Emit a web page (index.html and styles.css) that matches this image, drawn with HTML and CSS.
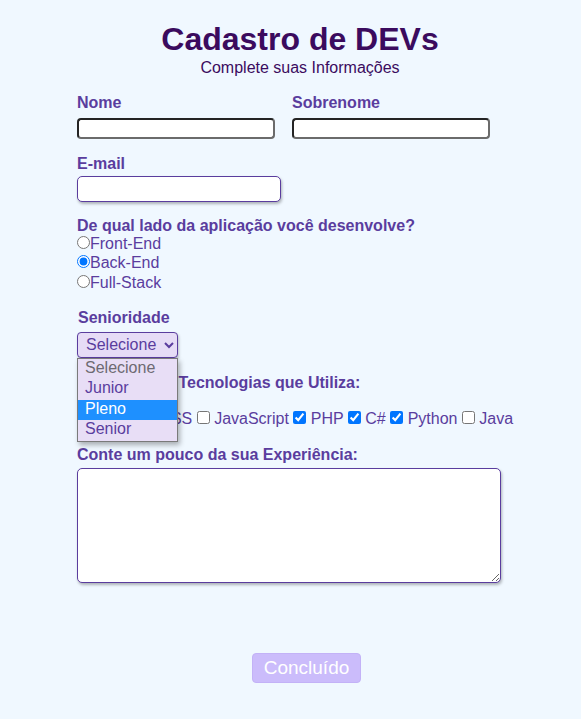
FILE: index.html
```html
<!DOCTYPE html>
<html lang="pt-BR">
<head>
<meta charset="utf-8">
<title>Cadastro de DEVs</title>
<link rel="stylesheet" href="styles.css">
</head>
<body>
<header class="header">
  <h1 class="title">Cadastro de DEVs</h1>
  <p class="subtitle">Complete suas Informações</p>
</header>
<form class="form">
  <div class="row-names">
    <div class="field">
      <label class="label" for="nome">Nome</label>
      <input class="input-name" id="nome" type="text">
    </div>
    <div class="field">
      <label class="label" for="sobrenome">Sobrenome</label>
      <input class="input-name" id="sobrenome" type="text">
    </div>
  </div>

  <div class="group group-email">
    <label class="label" for="email">E-mail</label>
    <input class="input-email" id="email" type="email">
  </div>

  <div class="group group-radio">
    <p class="label">De qual lado da aplicação você desenvolve?</p>
    <div class="radio-line"><input class="radio" type="radio" name="lado" id="fe"><label class="opt" for="fe">Front-End</label></div>
    <div class="radio-line"><input class="radio" type="radio" name="lado" id="be" checked><label class="opt" for="be">Back-End</label></div>
    <div class="radio-line radio-last"><input class="radio" type="radio" name="lado" id="fs"><label class="opt" for="fs">Full-Stack</label></div>
  </div>

  <div class="group group-senior">
    <label class="label label-senior" for="senior">Senioridade</label>
    <div class="select-wrap">
      <select class="select" id="senior">
        <option>Selecione</option>
        <option>Junior</option>
        <option>Pleno</option>
        <option>Senior</option>
      </select>
      <ul class="popup">
        <li class="popup-item popup-disabled">Selecione</li>
        <li class="popup-item">Junior</li>
        <li class="popup-item popup-active">Pleno</li>
        <li class="popup-item">Senior</li>
      </ul>
    </div>
  </div>

  <div class="group group-tech">
    <p class="label">Selecione as Tecnologias que Utiliza:</p>
    <div class="checks"><input class="check" type="checkbox" id="html"> <label class="opt" for="html">HTML</label> <input class="check" type="checkbox" id="css"> <label class="opt" for="css">CSS</label> <input class="check" type="checkbox" id="js"> <label class="opt" for="js">JavaScript</label> <input class="check" type="checkbox" id="php" checked> <label class="opt" for="php">PHP</label> <input class="check" type="checkbox" id="cs" checked> <label class="opt" for="cs">C#</label> <input class="check" type="checkbox" id="py" checked> <label class="opt" for="py">Python</label> <input class="check" type="checkbox" id="java"> <label class="opt" for="java">Java</label></div>
  </div>

  <div class="group group-exp">
    <label class="label" for="exp">Conte um pouco da sua Experiência:</label>
    <textarea class="textarea" id="exp"></textarea>
  </div>

  <button class="button" type="button">Concluído</button>
</form>
</body>
</html>
```
FILE: styles.css
```css
* {
  margin: 0;
  padding: 0;
  box-sizing: border-box;
}

html, body {
  background: #f0f8ff;
}

body {
  font-family: "Liberation Sans", Arial, sans-serif;
  font-size: 16px;
  color: #5a3d9e;
  width: 581px;
  min-height: 719px;
}

.header {
  padding-top: 21px;
  padding-left: 19px;
  text-align: center;
}

.title {
  font-size: 32px;
  font-weight: bold;
  color: #3b0b5e;
  line-height: 36.8px;
}

.subtitle {
  margin-top: 1px;
  font-size: 16px;
  color: #3b0b5e;
  line-height: 18.4px;
}

.form {
  margin-left: 77px;
  margin-top: 17px;
  width: 424px;
  display: flex;
  flex-direction: column;
  align-items: flex-start;
}

.label {
  display: block;
  font-weight: bold;
  font-size: 16px;
  line-height: 18.4px;
  color: #5a3d9e;
}

.row-names {
  display: flex;
  gap: 17px;
}

.field {
  display: flex;
  flex-direction: column;
  gap: 5px;
}

.input-name {
  width: 198px;
  height: 21px;
  border-width: 2px;
  border-style: solid;
  border-color: #242424 #6b6b6b #6b6b6b #242424;
  border-radius: 4px;
  background: #fff;
  font-family: "Liberation Sans", Arial, sans-serif;
}

.group {
  display: flex;
  flex-direction: column;
  align-items: flex-start;
}

.group-email {
  margin-top: 16px;
  gap: 3px;
}

.input-email {
  width: 204px;
  height: 26px;
  border: 1px solid #5a3d9e;
  border-radius: 5px;
  background: #fff;
  box-shadow: 1px 2px 3px rgba(0, 0, 0, 0.28);
  font-family: "Liberation Sans", Arial, sans-serif;
}

.group-radio {
  margin-top: 15px;
}

.radio-line {
  display: flex;
  align-items: baseline;
  line-height: 18.4px;
  height: 18.4px;
}

.radio-last {
  margin-top: 1.6px;
}

.radio {
  width: 13px;
  height: 13px;
  margin: 0;
}

.opt {
  color: #5a3d9e;
}

.group-senior {
  margin-top: 17px;
  gap: 4px;
}

.label-senior {
  margin-left: 1px;
}

.select-wrap {
  position: relative;
}

.select {
  width: 101px;
  height: 26px;
  border: 1px solid #5a3d9e;
  border-radius: 4px;
  background-color: #e6dcf6;
  color: #5a3d9e;
  font-family: "Liberation Sans", Arial, sans-serif;
  font-size: 16px;
  padding-left: 4px;
  box-shadow: 1px 2px 3px rgba(0, 0, 0, 0.22);
}

.popup {
  position: absolute;
  top: 26px;
  left: 0;
  width: 101px;
  list-style: none;
  background: #e8def6;
  border: 1px solid #7a7a7a;
  box-shadow: 2px 3px 5px rgba(0, 0, 0, 0.3);
  z-index: 10;
}

.popup-item {
  height: 20.5px;
  line-height: 17px;
  padding-left: 7px;
  font-size: 16px;
  color: #5a3d9e;
}

.popup-disabled {
  color: #6d6a72;
}

.popup-active {
  background: #1e90ff;
  color: #fff;
}

.group-tech {
  margin-top: 16px;
  gap: 17.5px;
}

.checks {
  line-height: 18.4px;
  white-space: nowrap;
}

.check {
  width: 13px;
  height: 13px;
  margin: 0;
}

.group-exp {
  margin-top: 17.6px;
  gap: 3.6px;
}

.textarea {
  width: 424px;
  height: 115.5px;
  border: 1px solid #5a3d9e;
  border-radius: 5px;
  background: #fff;
  box-shadow: 1px 2px 3px rgba(0, 0, 0, 0.28);
  font-family: "Liberation Sans", Arial, sans-serif;
}

.button {
  margin-top: 70px;
  margin-left: 175px;
  width: 109px;
  height: 30px;
  border: 1px solid #c3b2f7;
  border-radius: 4px;
  background: #cbbcfb;
  color: #ffffff;
  font-family: "Liberation Sans", Arial, sans-serif;
  font-size: 19px;
}
```
